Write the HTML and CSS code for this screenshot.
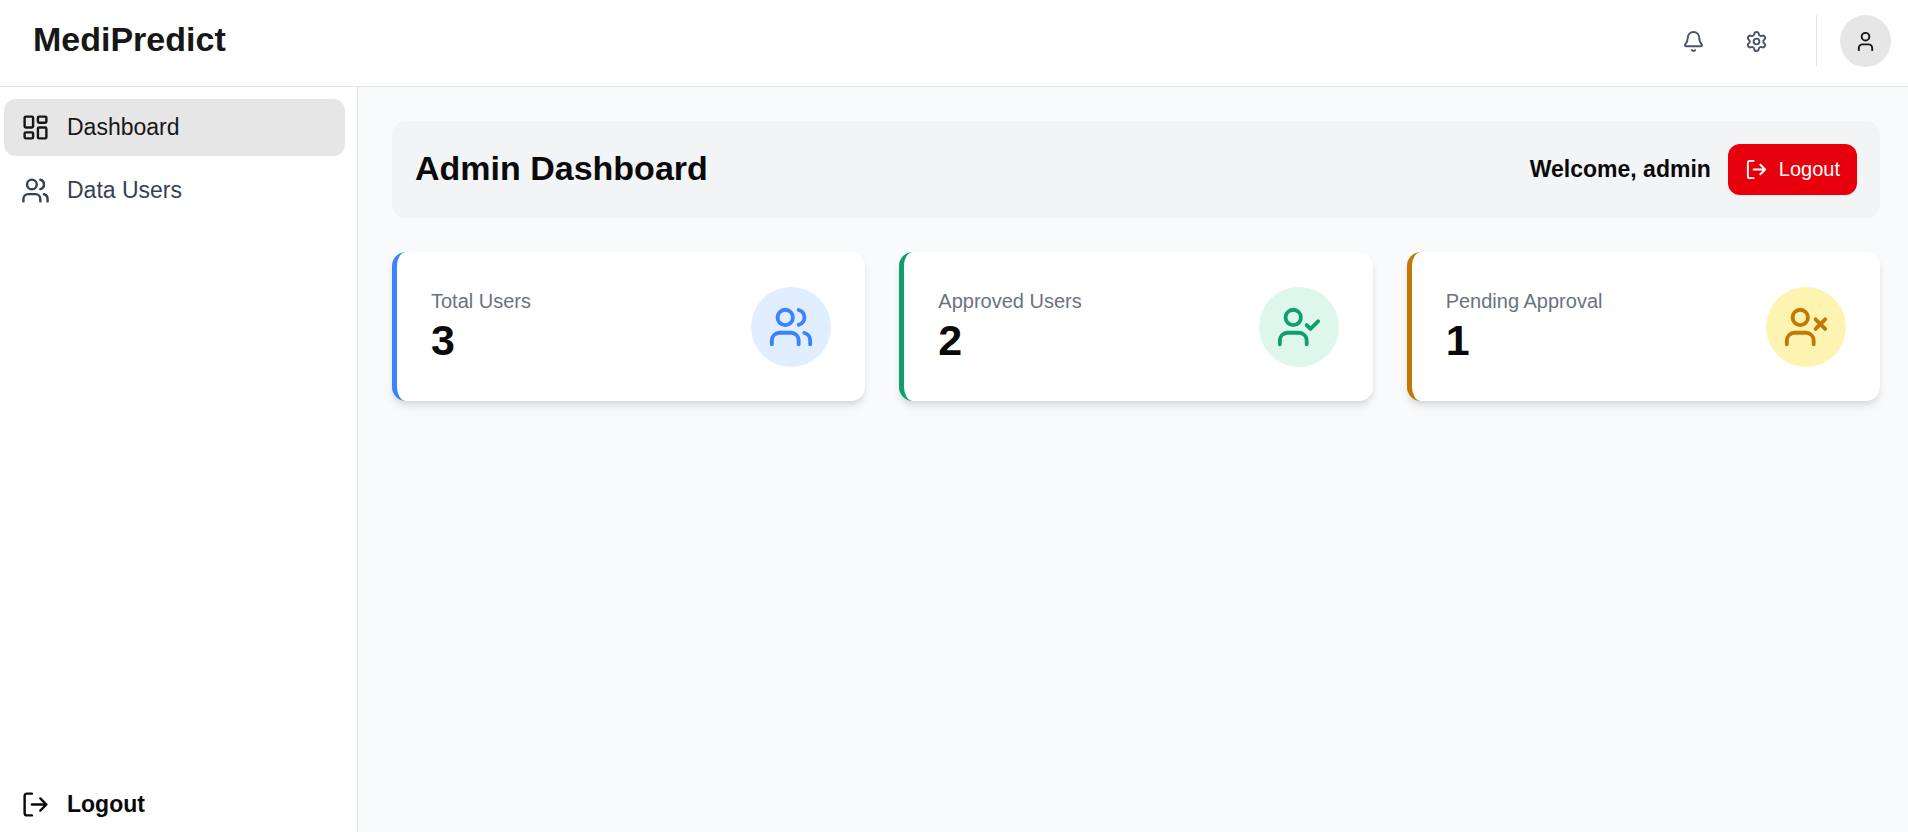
FILE: index.html
```html
<!DOCTYPE html>
<html lang="en">
<head>
<meta charset="utf-8">
<title>MediPredict</title>
<link rel="stylesheet" href="styles.css">
</head>
<body>
<svg class="sprite" aria-hidden="true">
  <symbol id="users" viewBox="0 0 24 24"><path d="M16 21v-2a4 4 0 0 0-4-4H6a4 4 0 0 0-4 4v2"/><circle cx="9" cy="7" r="4"/><path d="M16 3.128a4 4 0 0 1 0 7.744M22 21v-2a4 4 0 0 0-3-3.87"/></symbol>
  <symbol id="logout" viewBox="0 0 24 24"><path d="m16 17 5-5-5-5M21 12H9M9 21H5a2 2 0 0 1-2-2V5a2 2 0 0 1 2-2h4"/></symbol>
</svg>
<header class="topbar">
  <a class="brand" href="#">MediPredict</a>
  <div class="tools">
    <button class="tool" type="button" aria-label="Notifications"><svg class="icon icon-sm" viewBox="0 0 24 24"><path d="M10.268 21a2 2 0 0 0 3.464 0M3.262 15.326A1 1 0 0 0 4 17h16a1 1 0 0 0 .74-1.673C19.41 13.956 18 12.499 18 8A6 6 0 0 0 6 8c0 4.499-1.411 5.956-2.738 7.326"/></svg></button>
    <button class="tool" type="button" aria-label="Settings"><svg class="icon icon-sm" viewBox="0 0 24 24"><path d="M9.671 4.136a2.34 2.34 0 0 1 4.659 0 2.34 2.34 0 0 0 3.319 1.915 2.34 2.34 0 0 1 2.33 4.033 2.34 2.34 0 0 0 0 3.831 2.34 2.34 0 0 1-2.33 4.033 2.34 2.34 0 0 0-3.319 1.915 2.34 2.34 0 0 1-4.659 0 2.34 2.34 0 0 0-3.32-1.915 2.34 2.34 0 0 1-2.33-4.033 2.34 2.34 0 0 0 0-3.831A2.34 2.34 0 0 1 6.35 6.051a2.34 2.34 0 0 0 3.319-1.915"/><circle cx="12" cy="12" r="3"/></svg></button>
    <div class="account">
      <button class="avatar" type="button" aria-label="Account"><svg class="icon icon-sm" viewBox="0 0 24 24"><path d="M19 21v-2a4 4 0 0 0-4-4H9a4 4 0 0 0-4 4v2"/><circle cx="12" cy="7" r="4"/></svg></button>
    </div>
  </div>
</header>
<div class="shell">
  <aside class="sidebar">
    <nav class="nav">
      <a class="nav-item active" href="#"><svg class="icon icon-md" viewBox="0 0 24 24"><rect width="7" height="9" x="3" y="3" rx="1"/><rect width="7" height="5" x="14" y="3" rx="1"/><rect width="7" height="9" x="14" y="12" rx="1"/><rect width="7" height="5" x="3" y="16" rx="1"/></svg>Dashboard</a>
      <a class="nav-item" href="#"><svg class="icon icon-md"><use href="#users"/></svg>Data Users</a>
    </nav>
    <button class="nav-item nav-logout" type="button"><svg class="icon icon-md"><use href="#logout"/></svg>Logout</button>
  </aside>
  <main class="main">
    <section class="banner">
      <h1 class="title">Admin Dashboard</h1>
      <div class="session">
        <p class="welcome">Welcome, admin</p>
        <button class="logout" type="button"><svg class="icon icon-sm"><use href="#logout"/></svg>Logout</button>
      </div>
    </section>
    <section class="cards">
      <article class="card blue">
        <div class="stat"><p class="label">Total Users</p><p class="value">3</p></div>
        <span class="badge"><svg class="icon icon-lg"><use href="#users"/></svg></span>
      </article>
      <article class="card green">
        <div class="stat"><p class="label">Approved Users</p><p class="value">2</p></div>
        <span class="badge"><svg class="icon icon-lg" viewBox="0 0 24 24"><path d="M16 21v-2a4 4 0 0 0-4-4H6a4 4 0 0 0-4 4v2"/><circle cx="9" cy="7" r="4"/><path d="m16 11 2 2 4-4"/></svg></span>
      </article>
      <article class="card amber">
        <div class="stat"><p class="label">Pending Approval</p><p class="value">1</p></div>
        <span class="badge"><svg class="icon icon-lg" viewBox="0 0 24 24"><path d="M16 21v-2a4 4 0 0 0-4-4H6a4 4 0 0 0-4 4v2"/><circle cx="9" cy="7" r="4"/><path d="m17 8 5 5M22 8l-5 5"/></svg></span>
      </article>
    </section>
  </main>
</div>
</body>
</html>
```
FILE: styles.css
```css
* { box-sizing: border-box; }
body {
  margin: 0;
  min-height: 100vh;
  display: flex;
  flex-direction: column;
  background: #f9fafb;
  color: #0a0a0a;
  font-family: "Liberation Sans", Arial, sans-serif;
  font-size: 23px;
}
h1, p { margin: 0; }
button { border: 0; padding: 0; background: none; font: inherit; color: inherit; cursor: pointer; }
a { color: inherit; text-decoration: none; }
.sprite { display: none; }
.icon {
  flex: none;
  fill: none;
  stroke: currentColor;
  stroke-width: 2;
  stroke-linecap: round;
  stroke-linejoin: round;
}
.icon-sm { width: 23px; height: 23px; }
.icon-md { width: 29px; height: 29px; }
.icon-lg { width: 46px; height: 46px; }

.topbar {
  display: flex;
  align-items: center;
  justify-content: space-between;
  height: 87px;
  padding: 0 17px 4px 33px;
  background: #fff;
  border-bottom: 1px solid #e2e4e8;
}
.brand { padding-bottom: 4px; font-size: 34px; font-weight: 700; line-height: 46px; color: #171717; }
.tools { display: flex; align-items: center; gap: 11px; }
.tool {
  display: grid;
  place-items: center;
  width: 52px;
  height: 52px;
  color: #4a5565;
}
.account { margin-left: 23px; padding-left: 23px; border-left: 1px solid #e2e4e8; }
.avatar {
  display: grid;
  place-items: center;
  width: 51px;
  height: 52px;
  border-radius: 50%;
  background: #e6e6e6;
  color: #171717;
}

.shell { flex: 1; display: flex; }
.sidebar {
  flex: none;
  display: flex;
  flex-direction: column;
  justify-content: space-between;
  width: 358px;
  padding: 12px 12px 0 4px;
  background: #fff;
  border-right: 1px solid #e2e4e8;
}
.nav { display: flex; flex-direction: column; gap: 6px; }
.nav-item {
  display: flex;
  align-items: center;
  gap: 17px;
  height: 57px;
  padding: 0 17px;
  border-radius: 12px;
  color: #364153;
}
.active { background: #e6e6e6; color: #171717; }
.nav-logout { height: 55px; color: #0a0a0a; font-weight: 700; }

.main { flex: 1; padding: 34px 28px 34px 34px; }
.banner {
  display: flex;
  align-items: center;
  justify-content: space-between;
  padding: 23px;
  margin-bottom: 34px;
  border-radius: 14px;
  background: #f3f4f6;
}
.title { padding-bottom: 4px; font-size: 34px; line-height: 46px; }
.session { display: flex; align-items: center; gap: 17px; }
.welcome { font-weight: 700; }
.logout {
  display: flex;
  align-items: center;
  gap: 11px;
  height: 51px;
  padding: 0 17px;
  border-radius: 12px;
  background: #e7000b;
  color: #fff;
  font-size: 20px;
  box-shadow: 0 1px 2px rgba(0, 0, 0, 0.05);
}
.cards { display: grid; grid-template-columns: repeat(3, 1fr); gap: 34px; }
.card {
  display: flex;
  align-items: center;
  justify-content: space-between;
  padding: 34px;
  border-left: 5px solid currentColor;
  border-radius: 14px;
  background: #fff;
  box-shadow: 0 6px 9px -1px rgba(0, 0, 0, 0.1), 0 3px 6px -3px rgba(0, 0, 0, 0.1);
}
.stat { padding-bottom: 3px; }
.label { font-size: 20px; line-height: 30px; color: #6a7282; }
.value { font-size: 43px; font-weight: 700; line-height: 48px; color: #0a0a0a; }
.badge { display: grid; place-items: center; width: 80px; height: 80px; border-radius: 50%; }
.blue { color: #3b82ff; }
.blue .badge { background: #e0eeff; }
.green { color: #0f9f6e; }
.green .badge { background: #def7ec; }
.amber { color: #c27803; }
.amber .badge { background: #fdf4b2; }
```
